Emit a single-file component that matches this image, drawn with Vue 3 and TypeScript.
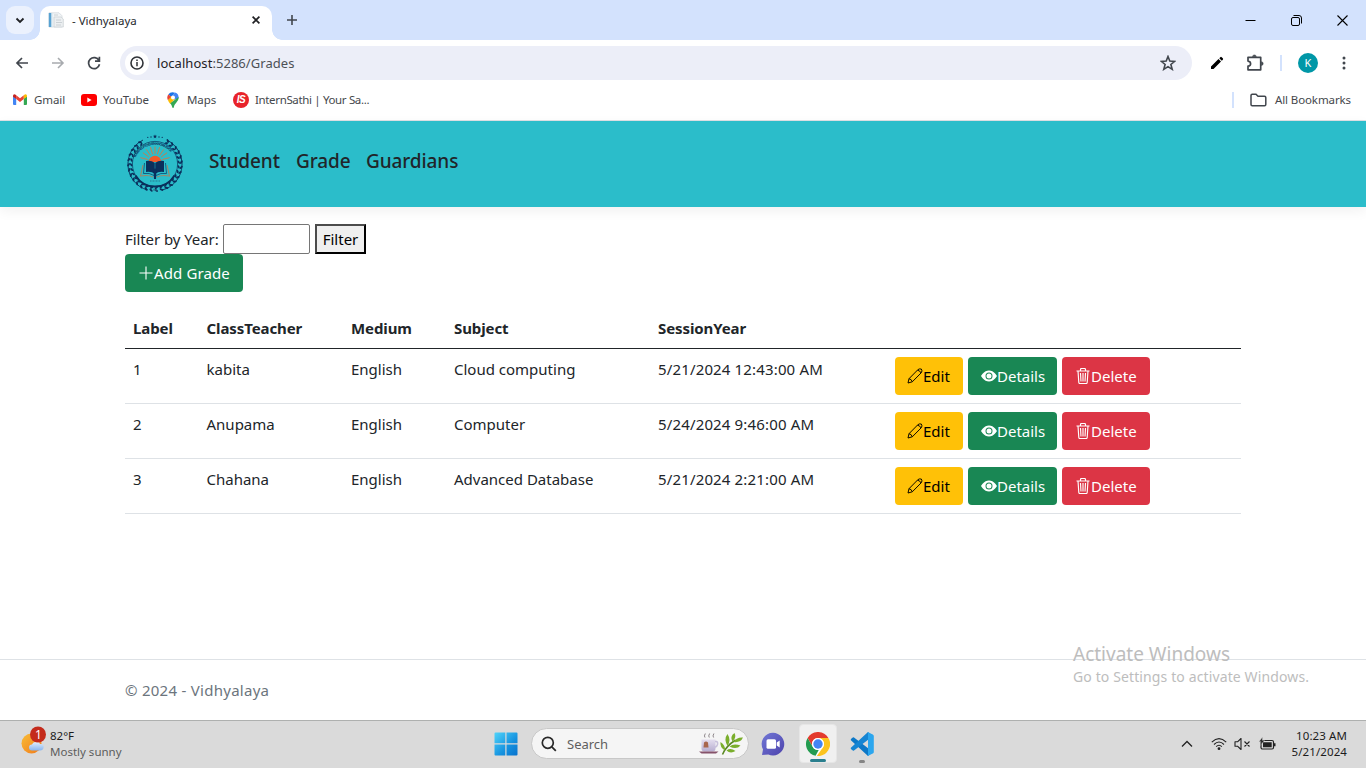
<script setup lang="ts">
interface Grade {
  label: number
  teacher: string
  medium: string
  subject: string
  session: string
}

const grades: Grade[] = [
  { label: 1, teacher: 'kabita', medium: 'English', subject: 'Cloud computing', session: '5/21/2024 12:43:00 AM' },
  { label: 2, teacher: 'Anupama', medium: 'English', subject: 'Computer', session: '5/24/2024 9:46:00 AM' },
  { label: 3, teacher: 'Chahana', medium: 'English', subject: 'Advanced Database', session: '5/21/2024 2:21:00 AM' },
]
const raysAngles: number[] = [-75, -54, -36, -18, 0, 18, 36, 54, 75]
const leafAngles: number[] = Array.from({ length: 27 }, (_, i) => 32 + i * 11.4)
</script>

<template>
  <div class="screen">
    <header class="tabstrip">
      <div class="tab-search">
        <svg width="10" height="7" viewBox="0 0 10 7"><path d="M1.5 1.5 5 5l3.500-3.500" fill="none" stroke="#202124" stroke-width="1.800" /></svg>
      </div>
      <div class="tab">
        <svg class="favicon" width="16" height="16" viewBox="0 0 16 16">
          <path d="M1 .8h10l3 3V15H1z" fill="#f1f4f6" stroke="#d3d9de" stroke-width=".8" />
          <path d="M.8 1H3.500v14H.8z" fill="#58a2d2" /><path d="M3.500 1h1v14h-1z" fill="#d6e6f0" />
          <path d="M6 5h7l2.300 2v8H6z" fill="#eceff1" stroke="#c8ced3" stroke-width=".7" />
          <path d="M8 8h5M8 10.500h6M8 13h5M6 3h4" stroke="#c3c9ce" stroke-width=".8" />
        </svg>
        <span class="tab-title">- Vidhyalaya</span>
        <svg width="8" height="8" viewBox="0 0 8 8"><path d="m.6.6 6.800 6.800m0-6.800L.6 7.400" stroke="#202124" stroke-width="1.700" /></svg>
      </div>
      <svg class="newtab" width="12" height="12" viewBox="0 0 12 12"><path d="M6 1v10M1 6h10" stroke="#41464d" stroke-width="1.600" /></svg>
      <div class="window-controls">
        <svg width="11" height="11" viewBox="0 0 11 11"><path d="M.5 5.500h10" stroke="#000" /></svg>
        <svg width="11" height="11" viewBox="0 0 11 11"><rect x=".5" y="2.500" width="8" height="8" rx="1.500" fill="none" stroke="#000" /><path d="M2.500.5h5.500a2.500 2.500 0 0 1 2.500 2.500v5.500" fill="none" stroke="#000" /></svg>
        <svg width="11" height="11" viewBox="0 0 11 11"><path d="m.5.5 10 10m0-10-10 10" stroke="#000" stroke-width="1.100" /></svg>
      </div>
    </header>

    <section class="toolbar">
      <svg class="back" width="14" height="14" viewBox="0 0 14 14"><path d="M13 7H2m5-5L2 7l5 5" fill="none" stroke="#41464d" stroke-width="1.700" /></svg>
      <svg class="forward" width="14" height="14" viewBox="0 0 14 14"><path d="M1 7h11M7 2l5 5-5 5" fill="none" stroke="#a8abaf" stroke-width="1.600" /></svg>
      <svg class="reload" width="14" height="14" viewBox="0 0 14 14"><path d="M12 4.600A5.500 5.500 0 1 0 12.500 8.300M12.400.8v4.400H8" fill="none" stroke="#41464d" stroke-width="1.700" /></svg>
      <div class="omnibox">
        <span class="site-info">
          <svg width="14" height="14" viewBox="0 0 14 14"><circle cx="7" cy="7" r="6" fill="none" stroke="#303338" stroke-width="1.600" /><path d="M7 6v4.300M7 3.500v1.500" stroke="#303338" stroke-width="1.500" /></svg>
        </span>
        <span class="url">localhost<span>:5286/Grades</span></span>
        <svg class="star" width="16" height="16" viewBox="0 0 16 16"><path d="m8 1.500 1.800 4.600 4.900.3-3.800 3.100 1.300 4.800L8 11.600l-4.200 2.700 1.300-4.800-3.800-3.100 4.900-.3z" fill="none" stroke="#41464d" stroke-width="1.600" /></svg>
      </div>
      <svg class="pen" width="14" height="14" viewBox="0 0 14 14"><path d="m1 10.500 7.500-7.500L11 5.500 3.500 13H1zM9.300 2.200l1-1q.7-.7 1.400 0l1.100 1.100q.7.7 0 1.400l-1 1z" fill="#000" /></svg>
      <svg class="puzzle" width="18" height="18" viewBox="0 0 18 18"><path d="M2 3.300h12.700v12.500H2v-3.600q2.600-.3 2.600-2.500T2 7.100z" fill="none" stroke="#41464d" stroke-width="1.700" stroke-linejoin="round" /><path d="M6.500 2.800a1.900 1.900 0 0 1 3.800 0zM15.300 7.700a1.900 1.900 0 0 1 0 3.800z" fill="#41464d" stroke="#41464d" stroke-width=".5" /></svg>
      <i class="bar"></i>
      <span class="avatar">K</span>
      <svg class="menu" width="4" height="14" viewBox="0 0 4 14"><g fill="#41464d"><circle cx="2" cy="2" r="1.500" /><circle cx="2" cy="7" r="1.500" /><circle cx="2" cy="12" r="1.500" /></g></svg>
    </section>

    <section class="bookmarks">
      <a class="bm gmail">
        <svg width="14" height="11" viewBox="0 0 14 11"><path d="M0 2v8q0 1 1 1h2.200V4.500z" fill="#4285f4" /><path d="M14 2v8q0 1-1 1h-2.200V4.500z" fill="#34a853" /><path d="m3.200 1.300 3.800 3 3.800-3v3.800L7 8 3.200 5.100z" fill="#ea4335" /><path d="M0 1.700Q0 .2 1.400.2q.7 0 1.800 1.100v3.800L0 2.700z" fill="#c5221f" /><path d="M14 1.700q0-1.500-1.400-1.500-.7 0-1.800 1.100v3.800L14 2.700z" fill="#fbbc04" /></svg>
        <span>Gmail</span>
      </a>
      <a class="bm youtube">
        <svg width="16" height="12" viewBox="0 0 16 12"><rect width="16" height="12" rx="3" fill="#f00" /><path d="m6.300 3.500 4.300 2.500-4.300 2.500z" fill="#fff" /></svg>
        <span>YouTube</span>
      </a>
      <a class="bm maps">
        <svg width="12" height="16" viewBox="0 0 12 16">
          <path d="M1.300 2.500 4.500 5 8 .7Q3.700-.8 1.300 2.500" fill="#1a73e8" /><path d="M1.300 2.500Q-.6 5 1 8.300L4.700 5z" fill="#ea4335" /><path d="M8 .6q4 1.300 3.600 5.800L7 7.700 4.500 5z" fill="#4285f4" /><path d="m1 8.300 3.500-4 3.200 3-4.400 4.600Q1.500 10 1 8.300" fill="#fbbc04" /><path d="M11.600 5q.3 3-2.200 5.600Q7 13 6.700 15.500q-.7 1-1.300 0-.4-2-2.100-4.200z" fill="#34a853" /><circle cx="6" cy="5.600" r="2" fill="#fff" />
        </svg>
        <span>Maps</span>
      </a>
      <a class="bm intern"><b class="is">IS</b><span>InternSathi | Your Sa...</span></a>
      <i class="bar"></i>
      <a class="bm all">
        <svg width="17" height="14" viewBox="0 0 17 14"><path d="M1 11.500v-9q0-1.200 1.200-1.200H6l2 2h6.500q1.300 0 1.300 1.200v7q0 1.200-1.200 1.200H2.200Q1 12.700 1 11.500z" fill="none" stroke="#41464d" stroke-width="1.500" /></svg>
        <span>All Bookmarks</span>
      </a>
    </section>

    <main class="page">
      <nav class="navbar">
        <svg class="logo" width="60" height="60" viewBox="0 0 60 60">
          <defs><path id="motto" d="M10.500 24a21 21 0 0 1 39 0" /></defs>
          <g fill="none" stroke="#0a2f5c">
            <circle cx="30" cy="30" r="22.600" stroke-width=".7" />
            <path d="M10.500 41.500a22.700 22.700 0 0 0 39 0" stroke-width="2" />
            <path d="M18 6a27 27 0 0 0-10 40q6 8 15 10M42 6a27 27 0 0 1 10 40q-6 8-15 10" stroke-width=".9" />
          </g>
          <g fill="#0a2f5c">
            <g v-for="a in leafAngles" :key="a" :transform="`rotate(${a} 30 30)`">
              <ellipse cx="28.600" cy="3.600" rx="2" ry="1" transform="rotate(35 28.600 3.600)" />
              <ellipse cx="28.600" cy="6.200" rx="1.800" ry=".9" transform="rotate(-35 28.600 6.200)" />
            </g>
            <path d="m30 .4.600 1.300 1.400.1-1 1 .2 1.400-1.200-.7-1.200.7.200-1.400-1-1 1.400-.1z" />
            <circle cx="26" cy="3" r=".7" /><circle cx="34" cy="3" r=".7" /><circle cx="22.800" cy="3.400" r=".6" /><circle cx="37.200" cy="3.400" r=".6" />
          </g>
          <text class="motto"><textPath href="#motto" textLength="43">YOUR HELP TO EVEN KNOWLEDGE</textPath></text>
          <g stroke="#c97b4c" stroke-width=".9">
            <path v-for="r in raysAngles" :key="r" d="M30 20v-7.500" :transform="`rotate(${r} 30 27.500)`" />
          </g>
          <path d="M23.800 28a6.200 6.200 0 0 1 12.400 0z" fill="#f15a29" />
          <path d="m18 31-2.500 11q8-1.500 12.500 1M42 31l2.500 11q-8-1.500-12.500 1" fill="none" stroke="#a18668" stroke-width="1.100" />
          <path d="m19.500 29-1 10.500q6-1 10.500 2M40.500 29l1 10.500q-6-1-10.500 2" fill="none" stroke="#0a4a72" stroke-width=".8" />
          <path d="M21 27q5-1 9 2 4-3 9-2v11q-5-1-9 2-4-3-9-2z" fill="#0a2f5c" />
          <path d="M30 29v8" stroke="#2bbdca" stroke-width=".5" /><path d="m28.500 36 1.500-2 1.500 2-.5 9h-2z" fill="#0a2f5c" />
          <path d="M25 47h10" stroke="#267b93" stroke-width="1" stroke-dasharray="1 .5" />
          <path d="m27 57 3-1.500 3 1.500m-5-2 2 1.500 2-1.500" fill="none" stroke="#286d88" stroke-width=".6" />
        </svg>
        <a class="n1">Student</a><a class="n2">Grade</a><a class="n3">Guardians</a>
      </nav>

      <div class="container">
        <form class="filter" @submit.prevent>
          <label for="year">Filter by Year:</label>
          <input id="year" type="text" />
          <button type="submit">Filter</button>
        </form>
        <a class="btn success add">
          <svg width="16" height="16" viewBox="0 0 16 16"><path d="M8 1.500v13M1.500 8h13" stroke="currentColor" stroke-width="1.100" /></svg><span>Add Grade</span>
        </a>
        <table>
          <colgroup><col class="c1" /><col class="c2" /><col class="c3" /><col class="c4" /><col class="c5" /><col /></colgroup>
          <thead><tr><th>Label</th><th>ClassTeacher</th><th>Medium</th><th>Subject</th><th>SessionYear</th><th></th></tr></thead>
          <tbody>
            <tr v-for="g in grades" :key="g.label">
              <td>{{ g.label }}</td><td>{{ g.teacher }}</td><td>{{ g.medium }}</td><td>{{ g.subject }}</td><td class="session">{{ g.session }}</td>
              <td>
                <div class="actions">
                  <a class="btn warning"><svg width="16" height="16" viewBox="0 0 16 16"><path d="M1 15l1-4.300L10.900 1.700Q12 .5 14.300 1q1.200 1.800.2 3.500L5.300 13.800zM2 10.700q2.500.3 3.300 3.100M10.500 2.200q2.600.4 3.500 2.800" fill="none" stroke="currentColor" stroke-width=".95" stroke-linejoin="round" /></svg><span>Edit</span></a>
                  <a class="btn success details"><svg width="16" height="16" viewBox="0 0 16 16"><path fill="currentColor" d="M10.500 8a2.500 2.500 0 1 1-5 0 2.500 2.500 0 0 1 5 0z" /><path fill="currentColor" d="M0 8s3-5.500 8-5.500S16 8 16 8s-3 5.500-8 5.500S0 8 0 8zm8 3.500a3.500 3.500 0 1 0 0-7 3.500 3.500 0 0 0 0 7z" /></svg><span>Details</span></a>
                  <a class="btn danger"><svg width="16" height="16" viewBox="0 0 16 16"><path fill="none" stroke="currentColor" stroke-width="1.150" d="M5.500 3V1.500q0-1 1-1h3q1 0 1 1V3M1.500 3h13M3 3l.8 11.500q.1 1 1 1h6.400q.9 0 1-1L13 3M5.500 5l.5 8.500M8 5v8.500M10.500 5l-.5 8.500" /></svg><span>Delete</span></a>
                </div>
              </td>
            </tr>
          </tbody>
        </table>
      </div>

      <footer class="footer"><span>© 2024 - Vidhyalaya</span></footer>
      <div class="watermark"><p class="w1">Activate Windows</p><p class="w2">Go to Settings to activate Windows.</p></div>
    </main>

    <section class="taskbar">
      <div class="weather">
        <svg width="28" height="32" viewBox="0 0 28 32">
          <defs>
            <linearGradient id="sun" x1="0" y1="0" x2="1" y2="1"><stop stop-color="#f8bd37" /><stop offset="1" stop-color="#f17a1b" /></linearGradient>
            <linearGradient id="cloud" x1="0" y1="0" x2="0" y2="1"><stop stop-color="#e3effd" /><stop offset="1" stop-color="#88b5ee" /></linearGradient>
          </defs>
          <circle cx="11.500" cy="18.500" r="10" fill="url(#sun)" />
          <path d="M12 25.500a3 3 0 0 1 0-6q1.200-3.500 4.800-2.200 2-1.500 3.200 1.700 4-.6 3.600 3.500-.4 3-3.600 3z" fill="url(#cloud)" />
          <circle cx="18" cy="9.500" r="8" fill="#c42b1c" />
          <text x="18.500" y="13.500" class="badge">1</text>
        </svg>
        <div><p class="temp">82°F</p><p class="cond">Mostly sunny</p></div>
      </div>

      <svg class="start" width="24" height="24" viewBox="0 0 24 24">
        <defs><linearGradient id="win" x1="0" y1="0" x2="1" y2="1"><stop stop-color="#50d4fa" /><stop offset=".6" stop-color="#1592df" /><stop offset="1" stop-color="#0872cd" /></linearGradient></defs>
        <path d="M.5 1.500q0-1 1-1h9.800v10.800H.5zM12.500.5h10q1 0 1 1v9.800h-11zM.5 12.500h10.800v11H1.500q-1 0-1-1zM12.500 12.500h11v10q0 1-1 1h-10z" fill="url(#win)" />
      </svg>

      <div class="search">
        <svg width="16" height="16" viewBox="0 0 16 16"><circle cx="6.800" cy="6.800" r="5.500" fill="none" stroke="#282828" stroke-width="1.700" /><path d="m10.800 10.800 4 4" stroke="#282828" stroke-width="1.800" /></svg>
        <span>Search</span>
        <svg class="art" width="46" height="24" viewBox="0 0 46 24">
          <defs><linearGradient id="cup" x1="0" y1="0" x2="0" y2="1"><stop stop-color="#e4deef" /><stop offset="1" stop-color="#b7add0" /></linearGradient></defs>
          <path d="M7 5.500q-1.300-1.200.3-4m4 4q-1.300-1.200.3-4m4 4q-1.300-1.200.3-4" fill="none" stroke="#8d8589" stroke-width="1" />
          <path d="M3.500 7.500h14v9q0 3-3 3h-8q-3 0-3-3z" fill="url(#cup)" /><path d="M17 9.500h1.500q1.500.5 1 3t-3 3" fill="none" stroke="#c7bfdb" stroke-width="1.500" />
          <path d="M6 10.500q2-2 4 0l.5 5h-5z" fill="#a8664d" /><path d="M1 19.500h19.500l-2.500 2H3.500z" fill="#86536b" />
          <path d="M24.500 22.500q3-8 13-14.500" fill="none" stroke="#598822" stroke-width="1.500" />
          <path d="M27 18.500q-5.500-3.500-4.500-8.500 5 3 4.500 8.500m2.500-4.500q-4-7 0-12 4 6 0 12m5-4.500q-3-5 2-8.500 2.500 4.500-2 8.500m1 .5q3-5 9.500-4.500-2.500 5.500-9.500 4.500m-4 4.500q4-3.500 11-1-4 4.500-11 1m-3 4q4-3 9 .5-5 3-9-.5" fill="#7aae2c" />
        </svg>
      </div>

      <svg class="chat" width="24" height="24" viewBox="0 0 24 24"><defs><linearGradient id="chat" x1="0" y1="0" x2="1" y2="1"><stop stop-color="#7278d6" /><stop offset="1" stop-color="#4d43ac" /></linearGradient></defs><path d="M12 .8a11.300 11.300 0 1 1-4.700 21.600L1 23l1-5.500A11.300 11.300 0 0 1 12 .8z" fill="url(#chat)" /><rect x="5.500" y="7.200" width="9.500" height="9.500" rx="1.500" fill="#fff" /><path d="m15.700 10.500 3-2v7l-3-2z" fill="#fff" /></svg>

      <div class="app-active">
        <svg width="24" height="24" viewBox="0 0 24 24"><circle cx="12" cy="12" r="12" fill="#fff" /><path d="M1.600 6A12 12 0 0 1 22.400 6H12a6 6 0 0 0-5.200 9z" fill="#e33b2e" /><path d="M1.600 6 6.800 15A6 6 0 0 0 12 18h.7L9.600 23.800A12 12 0 0 1 1.600 6z" fill="#239b50" /><path d="M22.400 6A12 12 0 0 1 10.800 24l6.400-9A6 6 0 0 0 15 6.800L12 6z" fill="#fcc31e" /><circle cx="12" cy="12" r="6" fill="#fff" /><circle cx="12" cy="12" r="4.700" fill="#4285f4" /></svg>
        <i></i>
      </div>
      <div class="app-code">
        <svg width="24" height="24" viewBox="0 0 24 24"><path d="m1.500 6.500 1.300-1q.6-.4 1.200 0L23 20l-5 4L.9 8.300q-.6-.9.6-1.800z" fill="#0d78c7" /><path d="m1.500 17.500 1.300 1q.6.4 1.200 0L23 4l-5-4L.9 15.700q-.6.9.6 1.800z" fill="#1685d3" /><path d="m17.500 0 5.300 2.400q1 .5 1 1.600v16q0 1.100-1 1.600L17.500 24q.5-.7.5-1.500v-21q0-.9-.5-1.500z" fill="#2ba6ee" /></svg>
        <i></i>
      </div>

      <div class="tray">
        <svg class="chev" width="12" height="8" viewBox="0 0 12 8"><path d="m1 6.500 5-5 5 5" fill="none" stroke="#222" stroke-width="1.300" /></svg>
        <svg class="wifi" width="16" height="14" viewBox="0 0 16 14"><g fill="none" stroke="#222" stroke-width="1.100"><path d="M.8 5.200q7.200-7 14.400 0M3 7.500q5-5 10 0M5.200 9.600q2.800-2.800 5.600 0" /></g><circle cx="8" cy="11.700" r="1.400" fill="#222" /></svg>
        <svg class="vol" width="17" height="14" viewBox="0 0 17 14"><path d="M1 4.800h2.500L7 1.500v11L3.500 9.200H1zM10.500 4.500l5 5m0-5-5 5" fill="none" stroke="#222" stroke-width="1.100" stroke-linejoin="round" /></svg>
        <svg class="bat" width="17" height="14" viewBox="0 0 17 14"><rect x="2" y="3.500" width="12.500" height="8.500" rx="1.500" fill="none" stroke="#222" stroke-width="1.200" /><path d="M4 5.300h8.700v5H4zM15 6.200h1.500v3H15z" fill="#222" /><path d="M3.500 0 0 4.700h2l-1 4 4.500-5.200H3.300z" fill="#222" stroke="#d9d9d9" stroke-width=".4" /></svg>
        <div class="clock"><p class="time">10:23 AM</p><p class="date">5/21/2024</p></div>
      </div>
    </section>
  </div>
</template>

<style>
body { margin: 0; overflow: hidden; }
</style>

<style scoped>
* { box-sizing: border-box; }
p { margin: 0; }
svg { display: block; flex: none; }
.screen { width: 1366px; height: 768px; display: flex; flex-direction: column; font-family: "Noto Sans", "Open Sans", sans-serif; color: #212529; background: #fff; white-space: nowrap; }

.tabstrip { height: 40px; flex: none; display: flex; align-items: center; background: #d3e2fd; padding-left: 6px; }
.tab-search { width: 28px; height: 28px; border-radius: 9px; background: #ebf1fd; display: flex; align-items: center; justify-content: center; }
.tab { position: relative; margin-left: 6px; width: 232px; height: 34px; align-self: flex-end; background: #fff; border-radius: 10px 10px 0 0; display: flex; align-items: center; padding: 0 12px 6px 8px; }
.tab::before, .tab::after { content: ""; position: absolute; bottom: 0; width: 10px; height: 10px; }
.tab::before { left: -10px; background: radial-gradient(circle at 0 0, transparent 9.500px, #fff 10px); }
.tab::after { right: -10px; background: radial-gradient(circle at 100% 0, transparent 9.500px, #fff 10px); }
.tab-title { flex: 1; margin-left: 8px; font-size: 11.500px; color: #26292d; }
.newtab { margin-left: 14px; }
.window-controls { margin-left: auto; display: flex; gap: 35px; padding-right: 18px; }

.toolbar { height: 46px; flex: none; display: flex; align-items: center; padding-left: 15px; }
.forward { margin-left: 22px; }
.reload { margin-left: 22px; }
.omnibox { margin-left: 19px; width: 1072px; height: 34px; border-radius: 17px; background: #eceef8; display: flex; align-items: center; padding: 0 16px 0 5px; }
.site-info { width: 24px; height: 24px; border-radius: 50%; background: #fff; display: flex; align-items: center; justify-content: center; }
.url { flex: 1; margin-left: 8px; font-size: 13px; letter-spacing: .05px; color: #1f2226; }
.url span { color: #4d5156; }
.pen { margin-left: 18px; }
.puzzle { margin-left: 22px; }
.bar { width: 2px; height: 16px; background: #d3e2fd; }
.toolbar .bar { margin-left: 16px; }
.avatar { margin-left: 16px; width: 20px; height: 20px; border-radius: 50%; background: #0097a7; color: #fff; font: 11px/20px "Noto Sans", sans-serif; text-align: center; }
.menu { margin-left: 24px; }

.bookmarks { height: 35px; flex: none; display: flex; align-items: center; padding: 0 15px 7px 13px; border-bottom: 1px solid #dfe1e5; font-size: 11.500px; letter-spacing: -.1px; color: #45484c; }
.bm { display: flex; align-items: center; }
.gmail { width: 68px; gap: 7px; }
.youtube { width: 86px; gap: 6px; }
.maps { width: 66px; gap: 8px; }
.intern { gap: 6px; letter-spacing: -.35px; }
.is { width: 16px; height: 16px; border-radius: 50%; background: #e8232b; color: #fff; font: italic bold 10px/16px "Liberation Sans", sans-serif; text-align: center; }
.bookmarks .bar { margin-left: auto; }
.all { margin-left: 16px; gap: 8px; }

.page { position: relative; height: 599px; flex: none; display: flex; flex-direction: column; font-size: 15px; line-height: 24px; }
.navbar { height: 86px; flex: none; background: #2bbdca; box-shadow: 0 4px 12px rgba(0, 0, 0, .06); padding: 0 125px; display: flex; align-items: center; font-size: 19px; font-weight: 500; letter-spacing: -.1px; }
.navbar a { margin-top: -6px; }
.logo { margin-right: 24px; }
.motto { font: bold 3.500px "Liberation Sans", sans-serif; fill: #0a2f5c; }
.n1 { width: 87px; }
.n2 { width: 70px; }

.container { flex: 1; padding: 17px 125px 0; display: flex; flex-direction: column; align-items: flex-start; }
.filter { display: flex; height: 30px; align-items: center; }
.filter label { width: 98px; letter-spacing: -.08px; }
.filter input { width: 87px; height: 30px; border: 1px solid #767676; border-radius: 2px; background: #fff; padding: 0; }
.filter button { margin-left: 5px; width: 51px; height: 30px; border: 2px outset #000; border-color: #4c4c4c #000 #000 #4c4c4c; background: #efefef; color: #000; padding: 0; font: inherit; }
.btn { display: flex; align-items: center; height: 38px; padding: 0 12px; border-radius: 4px; color: #fff; }
.success { background: #198754; }
.warning { background: #ffc107; color: #000; width: 68px; }
.danger { background: #dc3545; width: 88px; padding-left: 13px; }
.details { width: 89px; padding-left: 13px; }
.add { width: 118px; padding-left: 13px; letter-spacing: .12px; }
.actions { display: flex; gap: 5px; }

table { margin-top: 16px; width: 1116px; border-collapse: separate; border-spacing: 0; table-layout: fixed; }
.c1 { width: 73.500px; }
.c2 { width: 144.500px; }
.c3 { width: 103px; }
.c4 { width: 204px; }
.c5 { width: 237px; }
th, td { text-align: left; vertical-align: top; padding: 8px; }
th { height: 41px; border-bottom: 1px solid #212529; letter-spacing: -.1px; }
td { height: 55px; border-bottom: 1px solid #dee2e6; }
.session { letter-spacing: .15px; }

.footer { height: 61px; flex: none; border-top: 1px solid #dee2e6; padding: 0 125px; line-height: 60px; letter-spacing: .27px; color: #6c757d; }
.watermark { position: absolute; left: 1073px; top: 519px; color: #bdbdbd; }
.w1 { font-size: 19px; line-height: 28px; }
.w2 { font-size: 14px; line-height: 18px; letter-spacing: .12px; }

.taskbar { height: 48px; flex: none; border-top: 1px solid #aeb0af; background: #dadada; display: flex; align-items: center; padding-bottom: 2px; }
.weather { width: 494px; display: flex; padding-left: 20px; font-size: 11.500px; line-height: 16px; align-items: center; }
.weather svg { margin: -6px 2px 0 0; }
.temp { color: #1c1c1c; }
.cond { color: #5c5c5c; }
.badge { font-size: 12px; fill: #fff; text-anchor: middle; }
.search { margin-left: 13px; width: 218px; height: 31px; border-radius: 16px; background: #f5f5f5; border: 1px solid #c8c8c8; display: flex; align-items: center; padding: 0 4px 0 9px; font-size: 13px; color: #5f5f5f; }
.search span { flex: 1; margin-left: 10px; }
.chat { margin-left: 12px; }
.app-active, .app-code { position: relative; display: flex; align-items: center; justify-content: center; width: 38px; height: 39px; }
.app-active { margin-left: 14px; background: #f0f0f0; border: 1px solid #e6e6e6; border-radius: 4px; }
.app-active i, .app-code i { position: absolute; bottom: 0; height: 3px; border-radius: 2px; }
.app-active i { width: 16px; background: #2a7f8e; }
.app-code { margin-left: 6px; }
.app-code i { width: 6px; background: #858585; }
.tray { margin-left: auto; display: flex; align-items: center; padding-right: 19px; }
.wifi { margin-left: 18px; }
.vol { margin-left: 7px; }
.bat { margin-left: 8px; }
.clock { width: 71px; text-align: right; font-size: 11.500px; line-height: 16px; letter-spacing: .1px; color: #1c1c1c; }
</style>
